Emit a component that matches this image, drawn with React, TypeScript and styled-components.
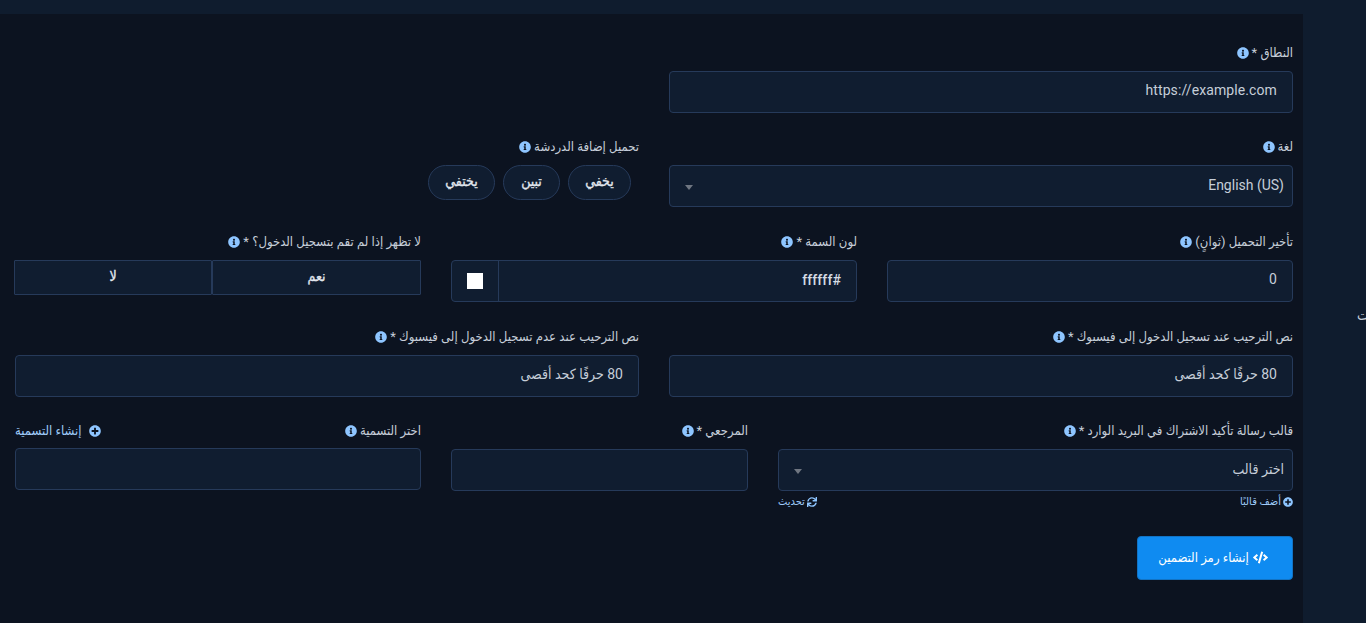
import React from "react";
import styled, { createGlobalStyle } from "styled-components";
import { FaInfoCircle, FaPlusCircle, FaSync, FaCode } from "react-icons/fa";

const fontStack = `Roboto, "DejaVu Sans Condensed", "DejaVu Sans", sans-serif`;

const GlobalStyle = createGlobalStyle`
  html, body { margin: 0; padding: 0; height: 100%; background: #0f1c2e; overflow: hidden; }
  * { box-sizing: border-box; }
`;

const Page = styled.div`
  width: 1366px;
  height: 623px;
  overflow: hidden;
  display: flex;
  flex-direction: column;
  background: #0f1c2e;
  font-family: ${fontStack};
  font-size: 14px;
  color: #c6ced9;
`;
const TopBar = styled.div`
  height: 14px;
  flex: none;
  background: #0f1c2e;
`;
const Body = styled.div`
  flex: 1;
  display: flex;
`;
const SideEdge = styled.div`
  width: 63px;
  flex: none;
  overflow: hidden;
  padding-top: 291px;
  padding-left: 54px;
  font-size: 14px;
  line-height: 20px;
  white-space: nowrap;
  color: #c6ced9;
`;
const Main = styled.main`
  width: 1303px;
  flex: none;
  direction: rtl;
  background: #0c1320;
  padding: 29px 10px 0 15px;
  display: flex;
  flex-direction: column;
`;
const Row = styled.div<{ $mt?: number }>`
  display: flex;
  gap: 30px;
  margin-top: ${(p) => p.$mt ?? 0}px;
`;
const Field = styled.div<{ $w: number }>`
  width: ${(p) => p.$w}px;
  flex: none;
`;
const LabelRow = styled.div<{ $mb?: number }>`
  height: 19px;
  margin-bottom: ${(p) => p.$mb ?? 9}px;
  display: flex;
  align-items: center;
  justify-content: space-between;
`;
const Label = styled.label`
  display: flex;
  align-items: center;
  gap: 3px;
  font-size: 13px;
  line-height: 19px;
  color: #c6ced9;
  white-space: nowrap;
`;
const InfoIcon = styled(FaInfoCircle)`
  width: 12px;
  height: 12px;
  color: #8ec5ff;
`;
const LabelAction = styled.a`
  display: flex;
  align-items: center;
  gap: 7px;
  font-size: 13px;
  color: #9fcbfa;
  svg { width: 12px; height: 12px; color: #8ec5ff; }
`;
const Input = styled.div`
  height: 42px;
  display: flex;
  align-items: center;
  padding: 0 15px 4px;
  background: #101d30;
  border: 1px solid #263a5a;
  border-radius: 4px;
  font-size: 14px;
  letter-spacing: 0.1px;
  color: #c6ced9;
`;
const SelectBox = styled(Input)`
  justify-content: space-between;
  padding: 0 8px 2px 15px;
  letter-spacing: 0;
`;
const Caret = styled.span`
  width: 0;
  height: 0;
  margin-top: 4px;
  border-left: 4px solid transparent;
  border-right: 4px solid transparent;
  border-top: 5px solid #6f7681;
`;
const ColorInput = styled(Input)`
  padding: 0;
`;
const ColorValue = styled.div`
  flex: 1;
  padding: 0 15px 3px;
  font-weight: 500;
  color: #d5dbe3;
`;
const ColorAddon = styled.div`
  width: 47px;
  height: 100%;
  flex: none;
  display: flex;
  align-items: center;
  justify-content: center;
  border-right: 1px solid #263a5a;
`;
const Swatch = styled.span`
  width: 16px;
  height: 16px;
  background: #fff;
`;
const PillGroup = styled.div`
  display: flex;
  gap: 8px;
  padding-right: 8px;
`;
const Pill = styled.button<{ $w: number }>`
  width: ${(p) => p.$w}px;
  height: 35px;
  padding: 0 0 3px;
  background: #101d30;
  border: 1px solid #263a5a;
  border-radius: 18px;
  font: 400 14px ${fontStack};
  -webkit-text-stroke: 0.3px #e2e7ee;
  color: #e2e7ee;
`;
const Segmented = styled.div`
  display: flex;
  margin-left: -1px;
`;
const SegmentButton = styled.button<{ $w: number }>`
  width: ${(p) => p.$w}px;
  height: 35px;
  padding: 0 0 3px;
  background: #101d30;
  border: 1px solid #263a5a;
  border-radius: 1px;
  font: 400 14px ${fontStack};
  -webkit-text-stroke: 0.3px #e2e7ee;
  color: #e2e7ee;
`;
const Helpers = styled.div`
  margin-top: 4px;
  display: flex;
  justify-content: space-between;
`;
const HelperLink = styled.a`
  display: flex;
  align-items: center;
  gap: 2px;
  font-size: 11px;
  line-height: 14px;
  color: #9fcbfa;
  svg { width: 10px; height: 10px; color: #8ec5ff; }
`;
const SubmitButton = styled.button`
  align-self: flex-start;
  margin-top: 27px;
  width: 156px;
  height: 44px;
  padding: 0 4px 2px 0;
  display: flex;
  align-items: center;
  justify-content: center;
  gap: 4px;
  background: #0f8bf1;
  border: 1px solid #1273c4;
  border-radius: 4px;
  font: 500 13px ${fontStack};
  color: #fff;
  svg { width: 15px; height: 15px; }
`;

const FieldLabel = ({ children }: { children: React.ReactNode }) => (
  <Label>
    {children}
    <InfoIcon />
  </Label>
);

export default function App() {
  return (
    <Page>
      <GlobalStyle />
      <TopBar />
      <Body>
        <Main>
          <Row>
            <Field $w={624}>
              <LabelRow><FieldLabel>النطاق *</FieldLabel></LabelRow>
              <Input>https://example.com</Input>
            </Field>
          </Row>
          <Row $mt={24}>
            <Field $w={624}>
              <LabelRow><FieldLabel>لغة</FieldLabel></LabelRow>
              <SelectBox>
                <span>English (US)</span>
                <Caret />
              </SelectBox>
            </Field>
            <Field $w={624}>
              <LabelRow><FieldLabel>تحميل إضافة الدردشة</FieldLabel></LabelRow>
              <PillGroup>
                <Pill $w={63}>يخفي</Pill>
                <Pill $w={57}>تبين</Pill>
                <Pill $w={67}>يختفي</Pill>
              </PillGroup>
            </Field>
          </Row>
          <Row $mt={25}>
            <Field $w={406}>
              <LabelRow><FieldLabel>تأخير التحميل (ثوانٍ)</FieldLabel></LabelRow>
              <Input>0</Input>
            </Field>
            <Field $w={406}>
              <LabelRow><FieldLabel>لون السمة *</FieldLabel></LabelRow>
              <ColorInput>
                <ColorValue>#ffffff</ColorValue>
                <ColorAddon><Swatch /></ColorAddon>
              </ColorInput>
            </Field>
            <Field $w={406}>
              <LabelRow><FieldLabel>لا تظهر إذا لم تقم بتسجيل الدخول؟ *</FieldLabel></LabelRow>
              <Segmented>
                <SegmentButton $w={209}>نعم</SegmentButton>
                <SegmentButton $w={198}>لا</SegmentButton>
              </Segmented>
            </Field>
          </Row>
          <Row $mt={25}>
            <Field $w={624}>
              <LabelRow><FieldLabel>نص الترحيب عند تسجيل الدخول إلى فيسبوك *</FieldLabel></LabelRow>
              <Input>80 حرفًا كحد أقصى</Input>
            </Field>
            <Field $w={624}>
              <LabelRow><FieldLabel>نص الترحيب عند عدم تسجيل الدخول إلى فيسبوك *</FieldLabel></LabelRow>
              <Input>80 حرفًا كحد أقصى</Input>
            </Field>
          </Row>
          <Row $mt={24}>
            <Field $w={515}>
              <LabelRow><FieldLabel>قالب رسالة تأكيد الاشتراك في البريد الوارد *</FieldLabel></LabelRow>
              <SelectBox>
                <span>اختر قالب</span>
                <Caret />
              </SelectBox>
              <Helpers>
                <HelperLink><FaPlusCircle />أضف قالبًا</HelperLink>
                <HelperLink><FaSync />تحديث</HelperLink>
              </Helpers>
            </Field>
            <Field $w={297}>
              <LabelRow><FieldLabel>المرجعي *</FieldLabel></LabelRow>
              <Input />
            </Field>
            <Field $w={406}>
              <LabelRow $mb={8}>
                <FieldLabel>اختر التسمية</FieldLabel>
                <LabelAction><FaPlusCircle />إنشاء التسمية</LabelAction>
              </LabelRow>
              <Input />
            </Field>
          </Row>
          <SubmitButton><FaCode />إنشاء رمز التضمين</SubmitButton>
        </Main>
        <SideEdge>ت</SideEdge>
      </Body>
    </Page>
  );
}
